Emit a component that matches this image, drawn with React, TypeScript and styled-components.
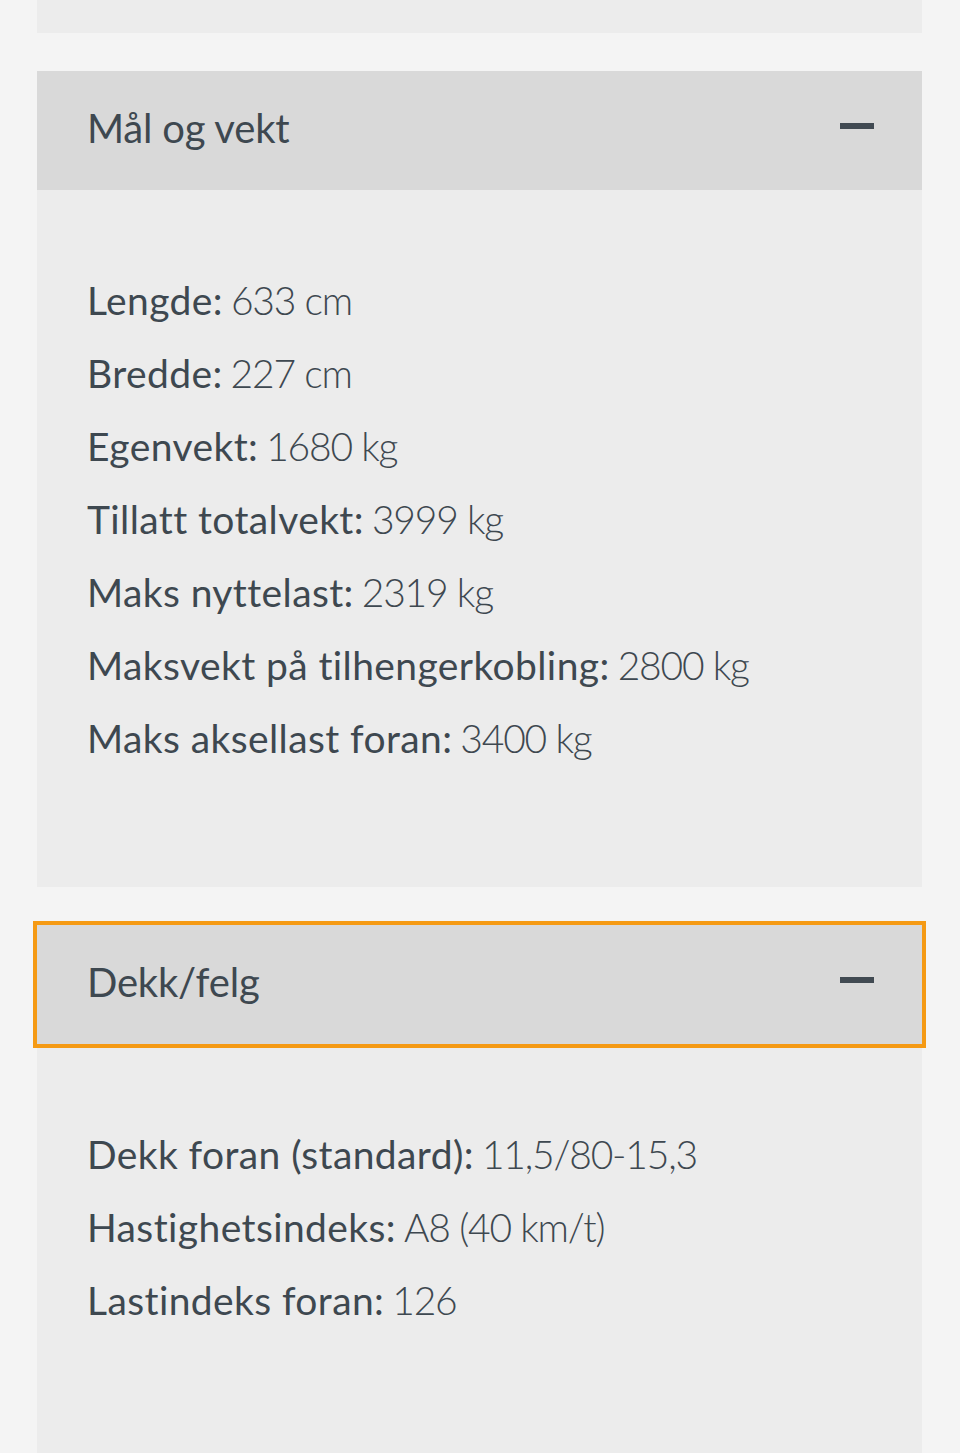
import styled, { createGlobalStyle } from "styled-components";

const Global = createGlobalStyle`
  html, body {
    margin: 0;
    padding: 0;
    background: #f4f4f4;
    overflow: hidden;
  }
  body {
    font-family: Lato, "Open Sans", sans-serif;
    color: #3e4850;
  }
`;

const Page = styled.div`
  display: flex;
  flex-direction: column;
  gap: 38px;
  padding: 0 38px 0 37px;
`;

const Section = styled.section`
  display: flex;
  flex-direction: column;
`;

const PrevTail = styled.div`
  height: 33px;
  background: #ececec;
`;

const Header = styled.button<{ $focused?: boolean }>`
  position: relative;
  z-index: 1;
  display: flex;
  align-items: center;
  justify-content: space-between;
  height: 119px;
  padding: 0 48px 6px 50px;
  border: 0;
  background: #d9d9d9;
  font: inherit;
  color: inherit;
  text-align: left;
  cursor: pointer;
  outline: ${(p) => (p.$focused ? "4px solid #f59a14" : "none")};
  outline-offset: 0;
`;

const Title = styled.span`
  font-size: 40px;
  font-weight: 400;
  letter-spacing: -0.2px;
`;

const Minus = styled.span`
  width: 34px;
  height: 6px;
  margin-top: -4px;
  background: #414a52;
`;

const Body = styled.dl<{ $bottom: number }>`
  margin: 0;
  padding: 74px 50px ${(p) => p.$bottom}px;
  background: #ececec;
  display: flex;
  flex-direction: column;
`;

const Row = styled.div`
  font-size: 39px;
  line-height: 73px;
  white-space: nowrap;
`;

const Label = styled.dt`
  display: inline;
  font-weight: 400;
  letter-spacing: 0.4px;
`;

const Value = styled.dd`
  display: inline;
  margin: 0 0 0 8px;
  font-weight: 300;
  letter-spacing: -1.2px;
`;

type Spec = [string, string];

const dimensions: Spec[] = [
  ["Lengde:", "633 cm"],
  ["Bredde:", "227 cm"],
  ["Egenvekt:", "1680 kg"],
  ["Tillatt totalvekt:", "3999 kg"],
  ["Maks nyttelast:", "2319 kg"],
  ["Maksvekt på tilhengerkobling:", "2800 kg"],
  ["Maks aksellast foran:", "3400 kg"],
];

const tyres: Spec[] = [
  ["Dekk foran (standard):", "11,5/80-15,3"],
  ["Hastighetsindeks:", "A8 (40 km/t)"],
  ["Lastindeks foran:", "126"],
];

const SpecSection = ({
  title,
  rows,
  focused,
  bottom,
}: {
  title: string;
  rows: Spec[];
  focused?: boolean;
  bottom: number;
}) => (
  <Section>
    <Header $focused={focused}>
      <Title>{title}</Title>
      <Minus />
    </Header>
    <Body $bottom={bottom}>
      {rows.map(([k, v]) => (
        <Row key={k}>
          <Label>{k}</Label>
          <Value>{v}</Value>
        </Row>
      ))}
    </Body>
  </Section>
);

export default function App() {
  return (
    <>
      <Global />
      <Page>
        <PrevTail />
        <SpecSection title="Mål og vekt" rows={dimensions} bottom={112} />
        <SpecSection title="Dekk/felg" rows={tyres} focused bottom={140} />
      </Page>
    </>
  );
}
